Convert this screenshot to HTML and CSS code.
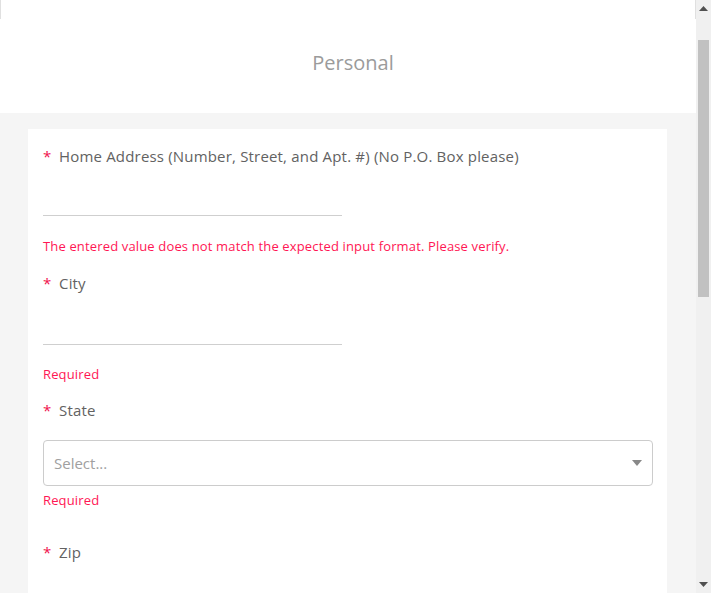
FILE: index.html
```html
<!DOCTYPE html>
<html>
<head>
<meta charset="utf-8">
<link rel="stylesheet" href="styles.css">
</head>
<body>
<div class="page">
  <div class="main">
    <div class="topstrip"></div>
    <header class="header"><h1 class="title">Personal</h1></header>
    <section class="content">
      <div class="card">
        <div class="field">
          <label class="label"><span class="star">*</span>Home Address (Number, Street, and Apt. #) (No P.O. Box please)</label>
          <div class="line-input"></div>
          <div class="error err-first">The entered value does not match the expected input format. Please verify.</div>
        </div>
        <div class="field f2">
          <label class="label"><span class="star">*</span>City</label>
          <div class="line-input tall"></div>
          <div class="error err-second">Required</div>
        </div>
        <div class="field f3">
          <label class="label"><span class="star">*</span>State</label>
          <div class="select">
            <span class="placeholder">Select...</span>
            <svg class="caret" width="10" height="6" viewBox="0 0 10 6"><path d="M0 0 H10 L5 6 Z" fill="#888"/></svg>
          </div>
          <div class="error err-third">Required</div>
        </div>
        <div class="field f4">
          <label class="label"><span class="star">*</span>Zip</label>
          <div class="line-input"></div>
        </div>
      </div>
    </section>
  </div>
  <div class="scrollbar">
    <div class="sb-btn"><svg width="9" height="5" viewBox="0 0 9 5"><path d="M0 5 H9 L4.5 0 Z" fill="#505050"/></svg></div>
    <div class="sb-track">
      <div class="sb-gap"></div>
      <div class="sb-thumb"></div>
    </div>
    <div class="sb-btn sb-down"><svg width="9" height="5" viewBox="0 0 9 5"><path d="M0 0 H9 L4.5 5 Z" fill="#505050"/></svg></div>
  </div>
</div>
</body>
</html>
```

FILE: styles.css
```css
html, body {
  margin: 0;
  padding: 0;
  height: 593px;
  overflow: hidden;
}
body {
  font-family: "Open Sans", Lato, sans-serif;
  background: #ffffff;
}
.page {
  display: flex;
  width: 711px;
  height: 593px;
}
.main {
  width: 696px;
  display: flex;
  flex-direction: column;
  background: #f5f5f5;
  overflow: hidden;
}
.topstrip {
  flex-shrink: 0;
  height: 19px;
  background: #fff;
  border-left: 1px solid #e0e0e0;
  border-right: 1px solid #e0e0e0;
}
.header {
  flex-shrink: 0;
  height: 94px;
  background: #fff;
  display: flex;
  align-items: center;
  justify-content: center;
  padding-left: 10px;
  box-sizing: border-box;
}
.title {
  margin: 0;
  font-weight: 400;
  font-size: 20px;
  color: #9b9b9b;
  position: relative;
  top: -4px;
}
.content {
  flex: 1 0 auto;
  padding: 16px 29px 0 28px;
}
.card {
  background: #fff;
  min-height: 480px;
  padding: 16px 14px 0 15px;
  box-sizing: border-box;
}
.field {
  display: flex;
  flex-direction: column;
}
.label {
  font-size: 15px;
  line-height: 22px;
  letter-spacing: 0.18px;
  color: #626262;
}
.star {
  color: #f0134d;
  display: inline-block;
  width: 16px;
}
.line-input {
  width: 299px;
  height: 48px;
  border-bottom: 1px solid #cfcfcf;
}
.line-input.tall { height: 50px; }
.error {
  font-size: 13px;
  line-height: 18px;
  letter-spacing: 0.15px;
  color: #ff1654;
}
.err-first { margin-top: 21px; }
.f2 { margin-top: 17px; }
.err-second { margin-top: 20px; }
.f3 { margin-top: 16px; }
.select {
  margin-top: 19px;
  height: 46px;
  box-sizing: border-box;
  border: 1px solid #cccccc;
  border-radius: 4px;
  display: flex;
  align-items: center;
  justify-content: space-between;
  padding: 0 10px 0 10px;
}
.placeholder {
  font-size: 15px;
  color: #a0a0a0;
}
.err-third { margin-top: 5px; }
.f4 { margin-top: 32px; }
.scrollbar {
  width: 15px;
  background: #f0f0f0;
  display: flex;
  flex-direction: column;
}
.sb-btn {
  height: 17px;
  display: flex;
  align-items: center;
  justify-content: center;
}
.sb-track {
  flex: 1;
  display: flex;
  flex-direction: column;
}
.sb-gap { height: 23px; }
.sb-thumb {
  height: 257px;
  margin: 0 2px;
  background: #c1c1c1;
}
```
